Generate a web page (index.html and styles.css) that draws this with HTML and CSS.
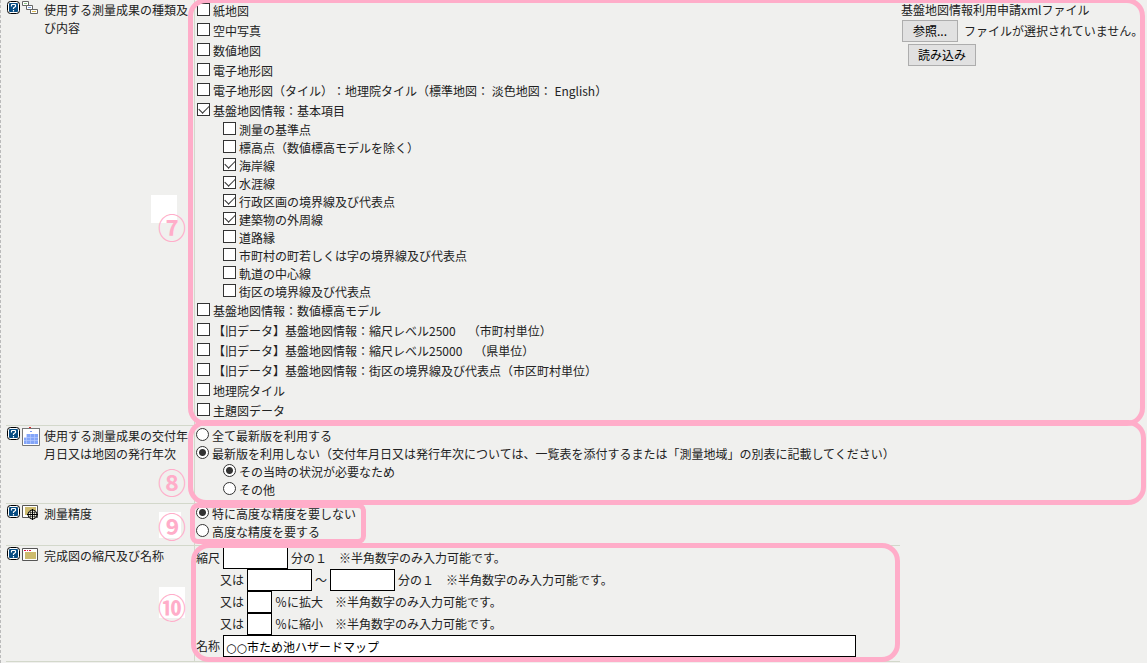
FILE: index.html
```
<!DOCTYPE html>
<html lang="ja">
<head>
<meta charset="utf-8">
<title>測量成果の使用承認申請</title>
<link rel="stylesheet" href="styles.css">
</head>
<body>
<svg class="defs" aria-hidden="true">
  <symbol id="help" viewBox="0 0 13 13">
    <rect x=".5" y=".5" width="12" height="12" rx="3" fill="#fff" stroke="#000"/>
    <rect x="2" y="2" width="9" height="9" rx="1" fill="#064b82"/>
    <path d="M4.500 5.500V4q0-.5.5-.5h3q.5 0 .5.500V5.500L6.500 7v1M6.500 9v1.500" fill="none" stroke="#fff" stroke-width="1.200"/>
  </symbol>
</svg>
<form class="page">
  <div class="form">
    <section class="row">
      <div class="icons">
        <svg class="help" role="img" aria-label="ヘルプ"><use href="#help"/></svg>
        <svg class="pic" viewBox="0 0 16 16" aria-hidden="true">
          <g fill="#fff" stroke="#666"><path d="M.5.5h6v4h-6z"/><path d="M4.500 4.500h6v4h-6z"/><path d="M8.500 8.500h7v4h-7z"/></g>
          <path d="M2 2h3v1H2z" fill="#8fca88"/><path d="M6 6h3v1H6z" fill="#7fa5e8"/><path d="M10 10h4v1h-4z" fill="#d8b850"/>
        </svg>
      </div>
      <div class="name">使用する測量成果の種類及び内容</div>
      <div class="value">
        <label class="item"><input type="checkbox">紙地図</label>
        <label class="item"><input type="checkbox">空中写真</label>
        <label class="item"><input type="checkbox">数値地図</label>
        <label class="item"><input type="checkbox">電子地形図</label>
        <label class="item"><input type="checkbox">電子地形図（タイル）：地理院タイル（標準地図： 淡色地図： English）</label>
        <label class="item"><input type="checkbox" checked>基盤地図情報：基本項目</label>
        <div class="sub">
          <label class="item"><input type="checkbox">測量の基準点</label>
          <label class="item"><input type="checkbox">標高点（数値標高モデルを除く）</label>
          <label class="item"><input type="checkbox" checked>海岸線</label>
          <label class="item"><input type="checkbox" checked>水涯線</label>
          <label class="item"><input type="checkbox" checked>行政区画の境界線及び代表点</label>
          <label class="item"><input type="checkbox" checked>建築物の外周線</label>
          <label class="item"><input type="checkbox">道路縁</label>
          <label class="item"><input type="checkbox">市町村の町若しくは字の境界線及び代表点</label>
          <label class="item"><input type="checkbox">軌道の中心線</label>
          <label class="item"><input type="checkbox">街区の境界線及び代表点</label>
        </div>
        <label class="item"><input type="checkbox">基盤地図情報：数値標高モデル</label>
        <label class="item"><input type="checkbox">【旧データ】基盤地図情報：縮尺レベル2500　（市町村単位）</label>
        <label class="item"><input type="checkbox">【旧データ】基盤地図情報：縮尺レベル25000　（県単位）</label>
        <label class="item"><input type="checkbox">【旧データ】基盤地図情報：街区の境界線及び代表点（市区町村単位）</label>
        <label class="item"><input type="checkbox">地理院タイル</label>
        <label class="item"><input type="checkbox">主題図データ</label>
      </div>
      <span class="frame frame-7"></span>
      <span class="patch patch-7"></span>
      <span class="mark mark-7">⑦</span>
    </section>

    <section class="row">
      <div class="icons">
        <svg class="help" role="img" aria-label="ヘルプ"><use href="#help"/></svg>
        <svg class="calendar" viewBox="0 0 18 20" aria-hidden="true">
          <path d="M.5 1.500h17v17H.5z" fill="#fff" stroke="#777"/><path d="M0 1h18v1H0z" fill="#777"/>
          <path d="M7 0h2v1H7z" fill="#d22"/><path d="M8 4h2v1H8z" fill="#7a9cf0"/>
          <path d="M5 7h11v10H2v-6h3z" fill="#83a5f8"/>
          <path d="M2 10.500h14M2 13.500h14M4.500 7v10M8.500 7v10M12.500 7v10" stroke="#b5c9ff" stroke-width=".7"/>
        </svg>
      </div>
      <div class="name">使用する測量成果の交付年月日又は地図の発行年次</div>
      <div class="value radios">
        <label class="item"><input type="radio" name="edition">全て最新版を利用する</label>
        <label class="item"><input type="radio" name="edition" checked>最新版を利用しない（交付年月日又は発行年次については、一覧表を添付するまたは「測量地域」の別表に記載してください）</label>
        <div class="sub">
          <label class="item"><input type="radio" name="reason" checked>その当時の状況が必要なため</label>
          <label class="item"><input type="radio" name="reason">その他</label>
        </div>
      </div>
      <span class="frame frame-8"></span>
      <span class="mark mark-8">⑧</span>
    </section>

    <section class="row">
      <div class="icons">
        <svg class="help" role="img" aria-label="ヘルプ"><use href="#help"/></svg>
        <svg class="pic" viewBox="0 0 16 16" aria-hidden="true">
          <path d="M.5.5h15v12H.5z" fill="#fff" stroke="#555"/><path d="M3 2h11v8H3z" fill="#cdbb6e"/>
          <circle cx="10.500" cy="9.500" r="4.500" fill="#f0eee0" stroke="#000"/>
          <path d="M5 9.500h11M10.500 4v11" stroke="#000"/>
          <path d="M6 7.500h9M6 11.500h9M8.500 5v9M12.500 5v9" stroke="#000" stroke-width=".5"/>
        </svg>
      </div>
      <div class="name">測量精度</div>
      <div class="value radios">
        <label class="item"><input type="radio" name="accuracy" checked>特に高度な精度を要しない</label>
        <label class="item"><input type="radio" name="accuracy">高度な精度を要する</label>
      </div>
      <span class="frame frame-9"></span>
      <span class="patch patch-9"></span>
      <span class="mark mark-9">⑨</span>
    </section>

    <section class="row">
      <div class="icons">
        <svg class="help" role="img" aria-label="ヘルプ"><use href="#help"/></svg>
        <svg class="pic" viewBox="0 0 16 16" aria-hidden="true">
          <path d="M.5 1.500h15v12H.5z" fill="#fff" stroke="#555"/><path d="M3 5h11v7H3z" fill="#cdbb6e"/>
          <path d="M2 3.500h2M5 3.500h1M7 3.500h2" stroke="#d14"/>
        </svg>
      </div>
      <div class="name">完成図の縮尺及び名称</div>
      <div class="value fields">
        <div class="line"><label for="scale">縮尺</label><input class="text" id="scale" type="text"><span>分の１　※半角数字のみ入力可能です。</span></div>
        <div class="line indent"><label for="from">又は</label><input class="text" id="from" type="text"><label for="to">～</label><input class="text" id="to" type="text"><span>分の１　※半角数字のみ入力可能です。</span></div>
        <div class="line indent"><label for="enlarge">又は</label><input class="text short" id="enlarge" type="text"><span>％に拡大　※半角数字のみ入力可能です。</span></div>
        <div class="line indent"><label for="reduce">又は</label><input class="text short" id="reduce" type="text"><span>％に縮小　※半角数字のみ入力可能です。</span></div>
        <div class="line"><label for="title">名称</label><input class="text long" id="title" type="text" value="○○市ため池ハザードマップ"></div>
      </div>
      <span class="frame frame-10"></span>
      <span class="patch patch-10"></span>
      <span class="mark mark-10">⑩</span>
    </section>
  </div>

  <aside class="upload">
    <div>基盤地図情報利用申請xmlファイル</div>
    <div class="picker"><button class="button browse" type="button">参照...</button><span>ファイルが選択されていません。</span></div>
    <button class="button load" type="button">読み込み</button>
  </aside>
</form>
</body>
</html>
```
FILE: styles.css
```
* {
  box-sizing: border-box;
}

body {
  margin: 0;
  background: #f0f0ee;
  color: #222;
  font: 12px/18px "Noto Sans CJK JP", sans-serif;
  text-spacing-trim: space-all;
}

.defs {
  position: absolute;
  width: 0;
  height: 0;
}

.page {
  display: grid;
  grid-template-columns: minmax(0, 1fr) 247px;
  min-height: 100vh;
  overflow: hidden;
  border-left: 1px dashed #bbb;
}

.form {
  padding-left: 5px;
}

.row {
  position: relative;
  display: grid;
  grid-template-columns: 38px 150px minmax(0, 1fr);
  border-bottom: 1px solid #d3d8cb;
}

.icons {
  display: flex;
  align-items: flex-start;
  gap: 2px;
  padding: 1px 0 0 1px;
}

.help {
  width: 13px;
  height: 13px;
}

.pic {
  width: 16px;
  height: 16px;
}

.calendar {
  width: 18px;
  height: 20px;
}

.name {
  padding: 1px 5px 0 0;
  line-break: anywhere;
}

.value {
  padding: 1px 0 4px 2px;
  border-left: 1px solid #d3d8cb;
  white-space: nowrap;
}

.value.radios,
.value.fields {
  padding-left: 1px;
}

.item {
  display: flex;
  align-items: center;
  gap: 3px;
  height: 20px;
}

.sub {
  padding-left: 26px;
}

.radios .sub {
  padding-left: 27px;
}

.sub .item,
.radios .item {
  height: 18px;
}

.item input {
  appearance: none;
  flex: none;
  width: 13px;
  height: 13px;
  margin: 0 0 3px;
  border: 1px solid #333;
  background: #fff;
}

.item input[type="checkbox"]:checked {
  display: grid;
  place-items: center;
}

.item input[type="checkbox"]:checked::before {
  content: "";
  width: 9px;
  height: 5px;
  margin-bottom: 3px;
  border: solid #333;
  border-width: 0 0 1px 1px;
  rotate: -45deg;
}

.item input[type="radio"] {
  border-radius: 50%;
}

.item input[type="radio"]:checked {
  background: radial-gradient(circle, #333 3px, #fff 4px);
}

.line {
  display: flex;
  align-items: center;
  gap: 3px;
  height: 22px;
}

.indent {
  padding-left: 24px;
}

.text {
  width: 65px;
  height: 22px;
  padding: 0 2px;
  border: 1px solid #000;
  border-radius: 0;
  background: #fff;
  color: #000;
  font: inherit;
}

.short {
  width: 25px;
}

.long {
  flex: 0 1 633px;
  font-family: "DejaVu Sans", "Noto Sans CJK JP", sans-serif;
}

.upload {
  padding: 1px 0 0 1px;
  white-space: nowrap;
}

.picker {
  display: flex;
  align-items: center;
  gap: 6px;
  padding: 1px 0 2px 1px;
}

.button {
  height: 22px;
  padding: 0;
  border: 1px solid #adadad;
  background: #e1e1e1;
  color: #000;
  font: inherit;
}

.browse {
  width: 56px;
}

.load {
  display: block;
  width: 68px;
  margin-left: 7px;
}

/* Annotation overlays: frames, white patches and step numbers */
.frame {
  position: absolute;
  border: 5px solid #ffadc9;
  border-radius: 18px;
  pointer-events: none;
}

.frame-7 {
  inset: -2px -245px -1px 182px;
}

.frame-8 {
  inset: -6px -246px -2px 182px;
}

.frame-9 {
  inset: -1px auto 1px 184px;
  width: 176px;
  border-radius: 8px;
}

.frame-10 {
  inset: -3px 0 -1px 185px;
}

.mark {
  position: absolute;
  left: 152px;
  width: 28px;
  color: #ffadc9;
  font: bold 28px/28px "Noto Sans CJK JP", sans-serif;
  text-align: center;
}

.mark-7 {
  top: 213px;
}

.mark-8 {
  top: 42px;
}

.mark-9 {
  top: 8px;
}

.mark-10 {
  top: 47px;
}

.patch {
  position: absolute;
  left: 153px;
  width: 22px;
  height: 26px;
  background: #fff;
}

.patch-7 {
  top: 195px;
  left: 145px;
  width: 26px;
  height: 28px;
}

.patch-9 {
  top: 8px;
}

.patch-10 {
  top: 41px;
  width: 26px;
  height: 31px;
}
```
